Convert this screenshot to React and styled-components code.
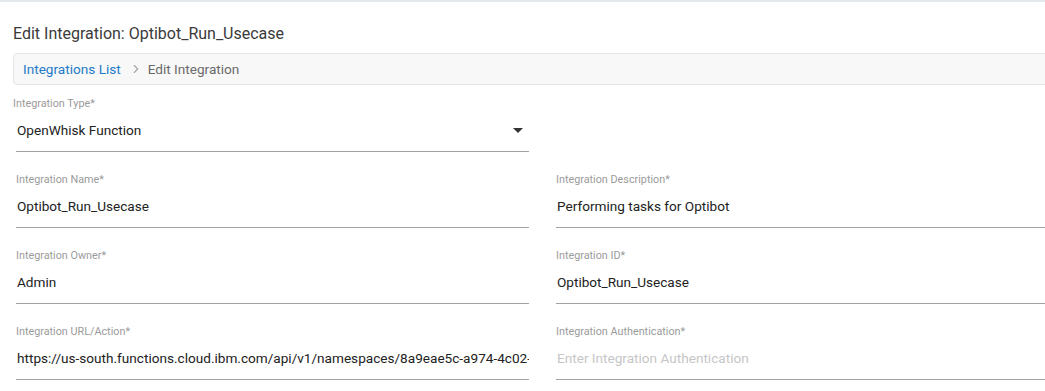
import * as React from "react";
import styled, { createGlobalStyle } from "styled-components";
import { ChevronRight } from "lucide-react";

const GlobalStyle = createGlobalStyle`
  body {
    margin: 0;
    background: #fff;
    font-family: Roboto, "Noto Sans", Arial, sans-serif;
    overflow: hidden;
  }
`;

//Whole page, top rule and left gutter
const Page = styled.div`
  width: 1100px;
  border-top: 2px solid #e4e8ec;
  padding: 22px 0 0 13px;
`;

const Title = styled.h1`
  margin: 0;
  font-size: 16px;
  line-height: 20px;
  font-weight: 400;
  color: #3a3a3a;
`;

//Grey breadcrumb strip
const Breadcrumb = styled.nav`
  margin-top: 9px;
  height: 30px;
  display: flex;
  align-items: center;
  gap: 4px;
  padding-left: 9px;
  background: #f8f8f8;
  border: 1px solid #e6e6e6;
  border-radius: 4px;
  font-size: 13.6px;
`;

const Crumb = styled.a`
  color: ${({ active }) => (active ? "#6a6a6a" : "#1f7bc8")};
  text-decoration: none;
  cursor: ${({ active }) => (active ? "default" : "pointer")};
`;

const Separator = styled(ChevronRight)`
  color: #a6a6a6;
  margin: 0 1px 0 4px;
`;

//Two column form
const Form = styled.div`
  margin-top: 12px;
  display: grid;
  grid-template-columns: 513px 513px;
  column-gap: 27px;
  row-gap: 21px;
  padding-left: 3px;
`;

const Field = styled.div`
  position: relative;
`;

const Label = styled.label`
  display: block;
  font-size: 10.8px;
  line-height: 14px;
  color: #9b9b9b;
  margin-left: ${({ outdent }) => (outdent ? "-3px" : "0")};
`;

const Input = styled.input`
  display: block;
  box-sizing: border-box;
  width: 100%;
  height: 41px;
  padding: 0 ${({ select }) => (select ? "30px" : "0")} 2px 1px;
  border: none;
  border-bottom: 1px solid #a2a2a2;
  outline: none;
  background: transparent;
  font-family: inherit;
  font-size: 13.6px;
  color: #222;
  &::placeholder {
    color: #c6c6c6;
  }
`;

const Caret = styled.svg`
  position: absolute;
  right: -1px;
  top: 21px;
  width: 24px;
  height: 24px;
  fill: #333;
`;

const fields = [
  { label: "Integration Name*", value: "Optibot_Run_Usecase" },
  { label: "Integration Description*", value: "Performing tasks for Optibot" },
  { label: "Integration Owner*", value: "Admin" },
  { label: "Integration ID*", value: "Optibot_Run_Usecase" },
  {
    label: "Integration URL/Action*",
    value:
      "https://us-south.functions.cloud.ibm.com/api/v1/namespaces/8a9eae5c-a974-4c02-9f1b-3c1e2d7a5b60/actions/Optibot_Run_Usecase",
  },
  {
    label: "Integration Authentication*",
    value: "",
    placeholder: "Enter Integration Authentication",
  },
];

const App = () => {
  return (
    <Page>
      <GlobalStyle />
      <Title>Edit Integration: Optibot_Run_Usecase</Title>
      <Breadcrumb>
        <Crumb>Integrations List</Crumb>
        <Separator size={14} strokeWidth={2} />
        <Crumb active>Edit Integration</Crumb>
      </Breadcrumb>
      <Form>
        <Field>
          <Label outdent>Integration Type*</Label>
          <Input select readOnly value="OpenWhisk Function" />
          <Caret viewBox="0 0 24 24">
            <path d="M7 10l5 5 5-5z" />
          </Caret>
        </Field>
        <div />
        {fields.map((f) => (
          <Field key={f.label}>
            <Label>{f.label}</Label>
            <Input readOnly value={f.value} placeholder={f.placeholder} />
          </Field>
        ))}
      </Form>
    </Page>
  );
};

export default App;
